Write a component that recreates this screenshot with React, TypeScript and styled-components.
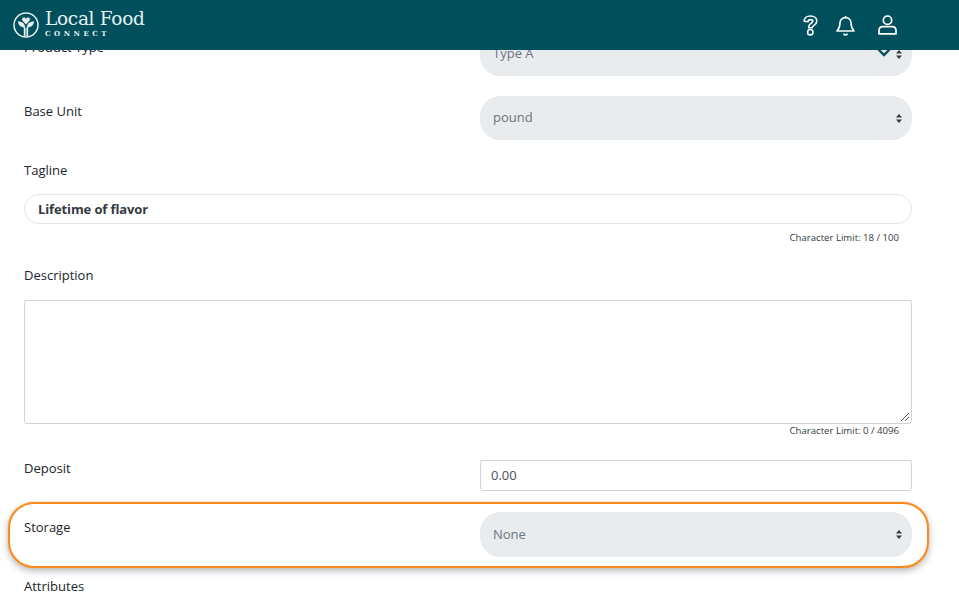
import React from "react";
import styled, { createGlobalStyle } from "styled-components";

const Global = createGlobalStyle`
  html, body {
    margin: 0;
    height: 100%;
    background: #fff;
    overflow: hidden;
  }
  body {
    font-family: "Open Sans", "Liberation Sans", sans-serif;
    font-size: 13px;
    color: #212529;
  }
`;

const Page = styled.div`
  position: relative;
  width: 959px;
  height: 609px;
  overflow: hidden;
`;

const Header = styled.header`
  position: relative;
  z-index: 2;
  height: 50px;
  background: #004f5d;
  display: flex;
  align-items: center;
  color: #fff;
`;

const Brand = styled.div`
  display: flex;
  align-items: center;
  gap: 6px;
  padding-left: 13px;
`;

const BrandText = styled.div`
  display: flex;
  flex-direction: column;
  font-family: "DejaVu Serif", "Liberation Serif", serif;
  color: #e8f0f0;
`;

const BrandName = styled.span`
  font-size: 18.5px;
  line-height: 21px;
  letter-spacing: -0.3px;
  margin-top: -4px;
`;

const BrandSub = styled.span`
  font-size: 7px;
  line-height: 9px;
  font-weight: 700;
  letter-spacing: 3.5px;
`;

const HeaderIcons = styled.div`
  margin-left: auto;
  margin-right: 49px;
  display: flex;
  align-items: center;
`;

const IconSlot = styled.span<{ $w: number }>`
  width: ${(p) => p.$w}px;
  display: flex;
  justify-content: center;
`;

const Form = styled.main`
  width: 888px;
  margin: -18px 0 0 24px;
`;

const Row = styled.div<{ $mb: number }>`
  display: grid;
  grid-template-columns: 456px 432px;
  margin-bottom: ${(p) => p.$mb}px;
`;

const Label = styled.label<{ $top?: number }>`
  display: block;
  line-height: 16px;
  padding-top: ${(p) => p.$top ?? 7}px;
`;

const StackLabel = styled.label<{ $mb: number }>`
  display: block;
  line-height: 18px;
  margin-bottom: ${(p) => p.$mb}px;
`;

const SelectBox = styled.div<{ $h: number }>`
  position: relative;
  height: ${(p) => p.$h}px;
  box-sizing: border-box;
  background: #e9ecef;
  border-radius: 20px;
  padding: 0 0 2px 13px;
  display: flex;
  align-items: center;
  font-size: 13px;
  color: #6c757d;
`;

const Sort = styled.svg`
  position: absolute;
  right: 10px;
  top: 18px;
`;

const Chevron = styled.svg`
  position: absolute;
  right: 21px;
  top: 16px;
`;

const TextInput = styled.div`
  height: 30px;
  box-sizing: border-box;
  border: 1px solid #e3e5e8;
  border-radius: 15px;
  padding-left: 13px;
  display: flex;
  align-items: center;
  font-weight: 700;
  letter-spacing: -0.12px;
  color: #343a40;
`;

const Limit = styled.div<{ $mt: number; $mb: number }>`
  text-align: right;
  padding-right: 13px;
  font-size: 9.6px;
  line-height: 12px;
  margin-top: ${(p) => p.$mt}px;
  margin-bottom: ${(p) => p.$mb}px;
  color: #343a40;
`;

const Area = styled.div`
  position: relative;
  height: 124px;
  box-sizing: border-box;
  border: 1px solid #ced4da;
  border-radius: 3px;
`;

const Grip = styled.svg`
  position: absolute;
  right: 1px;
  bottom: 1px;
`;

const NumberBox = styled.div`
  height: 31px;
  box-sizing: border-box;
  border: 1px solid #ced4da;
  border-radius: 3px;
  padding: 0 0 2px 10px;
  display: flex;
  align-items: center;
  color: #495057;
`;

const Callout = styled.div`
  position: absolute;
  left: 8px;
  top: 502px;
  width: 921px;
  height: 66px;
  box-sizing: border-box;
  border: 2px solid #fb8a1e;
  border-radius: 26px;
  box-shadow: 0 0 1px #fb8a1e, 0 3px 7px rgba(0, 0, 0, 0.28);
`;

function Select({ value, chevron, height = 44 }: { value: string; chevron?: boolean; height?: number }) {
  return (
    <SelectBox $h={height}>
      {value}
      {chevron && (
        <Chevron width="14" height="9" viewBox="0 0 14 9">
          <path d="M1.5 1.5 7 7l5.5-5.5" fill="none" stroke="#004f5d" strokeWidth="2.4" />
        </Chevron>
      )}
      <Sort width="6" height="9" viewBox="0 0 6 9">
        <path d="M3 0 6 3.6H0zM3 9 0 5.4h6z" fill="#343a40" />
      </Sort>
    </SelectBox>
  );
}

function Logo() {
  return (
    <svg width="26" height="26" viewBox="0 0 26 26" fill="none">
      <circle cx="13" cy="13" r="12" stroke="#e8f0f0" strokeWidth="1.5" />
      <path d="M13 12.4 9.4 8.6C8.4 7.4 9.2 5.6 10.8 5.6c.9 0 1.7.5 2.2 1.2.5-.7 1.3-1.2 2.2-1.2 1.6 0 2.4 1.8 1.4 3z" fill="#e8f0f0" />
      <path d="M4.8 9.6c4.2-.4 7 1.8 7.4 6-3.9.2-6.8-2-7.4-6zM21.2 9.6c-4.2-.4-7 1.8-7.4 6 3.9.2 6.8-2 7.4-6z" fill="#e8f0f0" />
      <path d="M11.7 15.5v8.7M14.3 15.5v8.7" stroke="#e8f0f0" strokeWidth="1.8" />
    </svg>
  );
}

function QuestionIcon() {
  return (
    <svg width="15" height="21" viewBox="0 0 15 21" fill="none" stroke="#fff" strokeWidth="1.6">
      <path d="M1.1 6.2C1.1 3 3.8 1 7.4 1s6.4 2 6.4 4.9c0 2.2-1.4 3.4-2.9 4.4-1.2.8-1.6 1.3-1.6 2.5H5.6c0-2.4.8-3.5 2.3-4.5 1.1-.8 1.9-1.2 1.9-2.2 0-.9-.9-1.5-2.4-1.5-1.4 0-2.3.7-2.4 2z" strokeLinejoin="round" />
      <circle cx="7.3" cy="17.2" r="2.7" />
    </svg>
  );
}

function BellIcon() {
  return (
    <svg width="19" height="21" viewBox="0 0 19 21" fill="none" stroke="#fff" strokeWidth="1.6">
      <path d="M9.5 1v1.6M9.5 2.6c-3.4 0-5.6 2.6-5.6 6 0 4-1 5.6-3 7.4h17.2c-2-1.8-3-3.4-3-7.4 0-3.4-2.2-6-5.6-6z" strokeLinejoin="round" />
      <path d="M7.6 18.6c.5 1 1.1 1.4 1.9 1.4s1.4-.4 1.9-1.4" />
    </svg>
  );
}

function UserIcon() {
  return (
    <svg width="19" height="20" viewBox="0 0 19 20" fill="none" stroke="#fff" strokeWidth="1.7">
      <circle cx="9.5" cy="5.2" r="4.2" />
      <path d="M5 11.6h9c2.4 0 4 1.6 4 4v3.2H1v-3.2c0-2.4 1.6-4 4-4z" strokeLinejoin="round" />
    </svg>
  );
}

export default function App() {
  return (
    <Page>
      <Global />
      <Header>
        <Brand>
          <Logo />
          <BrandText>
            <BrandName>Local Food</BrandName>
            <BrandSub>CONNECT</BrandSub>
          </BrandText>
        </Brand>
        <HeaderIcons>
          <IconSlot $w={32}>
            <QuestionIcon />
          </IconSlot>
          <IconSlot $w={38}>
            <BellIcon />
          </IconSlot>
          <IconSlot $w={46}>
            <UserIcon />
          </IconSlot>
        </HeaderIcons>
      </Header>
      <Form>
        <Row $mb={20}>
          <Label>Product Type</Label>
          <Select value="Type A" chevron />
        </Row>
        <Row $mb={21}>
          <Label>Base Unit</Label>
          <Select value="pound" />
        </Row>
        <StackLabel $mb={15}>Tagline</StackLabel>
        <TextInput>Lifetime of flavor</TextInput>
        <Limit $mt={8} $mb={22}>Character Limit: 18 / 100</Limit>
        <StackLabel $mb={16}>Description</StackLabel>
        <Area>
          <Grip width="10" height="10" viewBox="0 0 10 10">
            <path d="M9 1 1 9M9 5 5 9" stroke="#555" strokeWidth="1" />
          </Grip>
        </Area>
        <Limit $mt={1} $mb={23}>Character Limit: 0 / 4096</Limit>
        <Row $mb={21}>
          <Label $top={0}>Deposit</Label>
          <NumberBox>0.00</NumberBox>
        </Row>
        <Row $mb={14}>
          <Label>Storage</Label>
          <Select value="None" height={45} />
        </Row>
        <Label>Attributes</Label>
      </Form>
      <Callout />
    </Page>
  );
}
